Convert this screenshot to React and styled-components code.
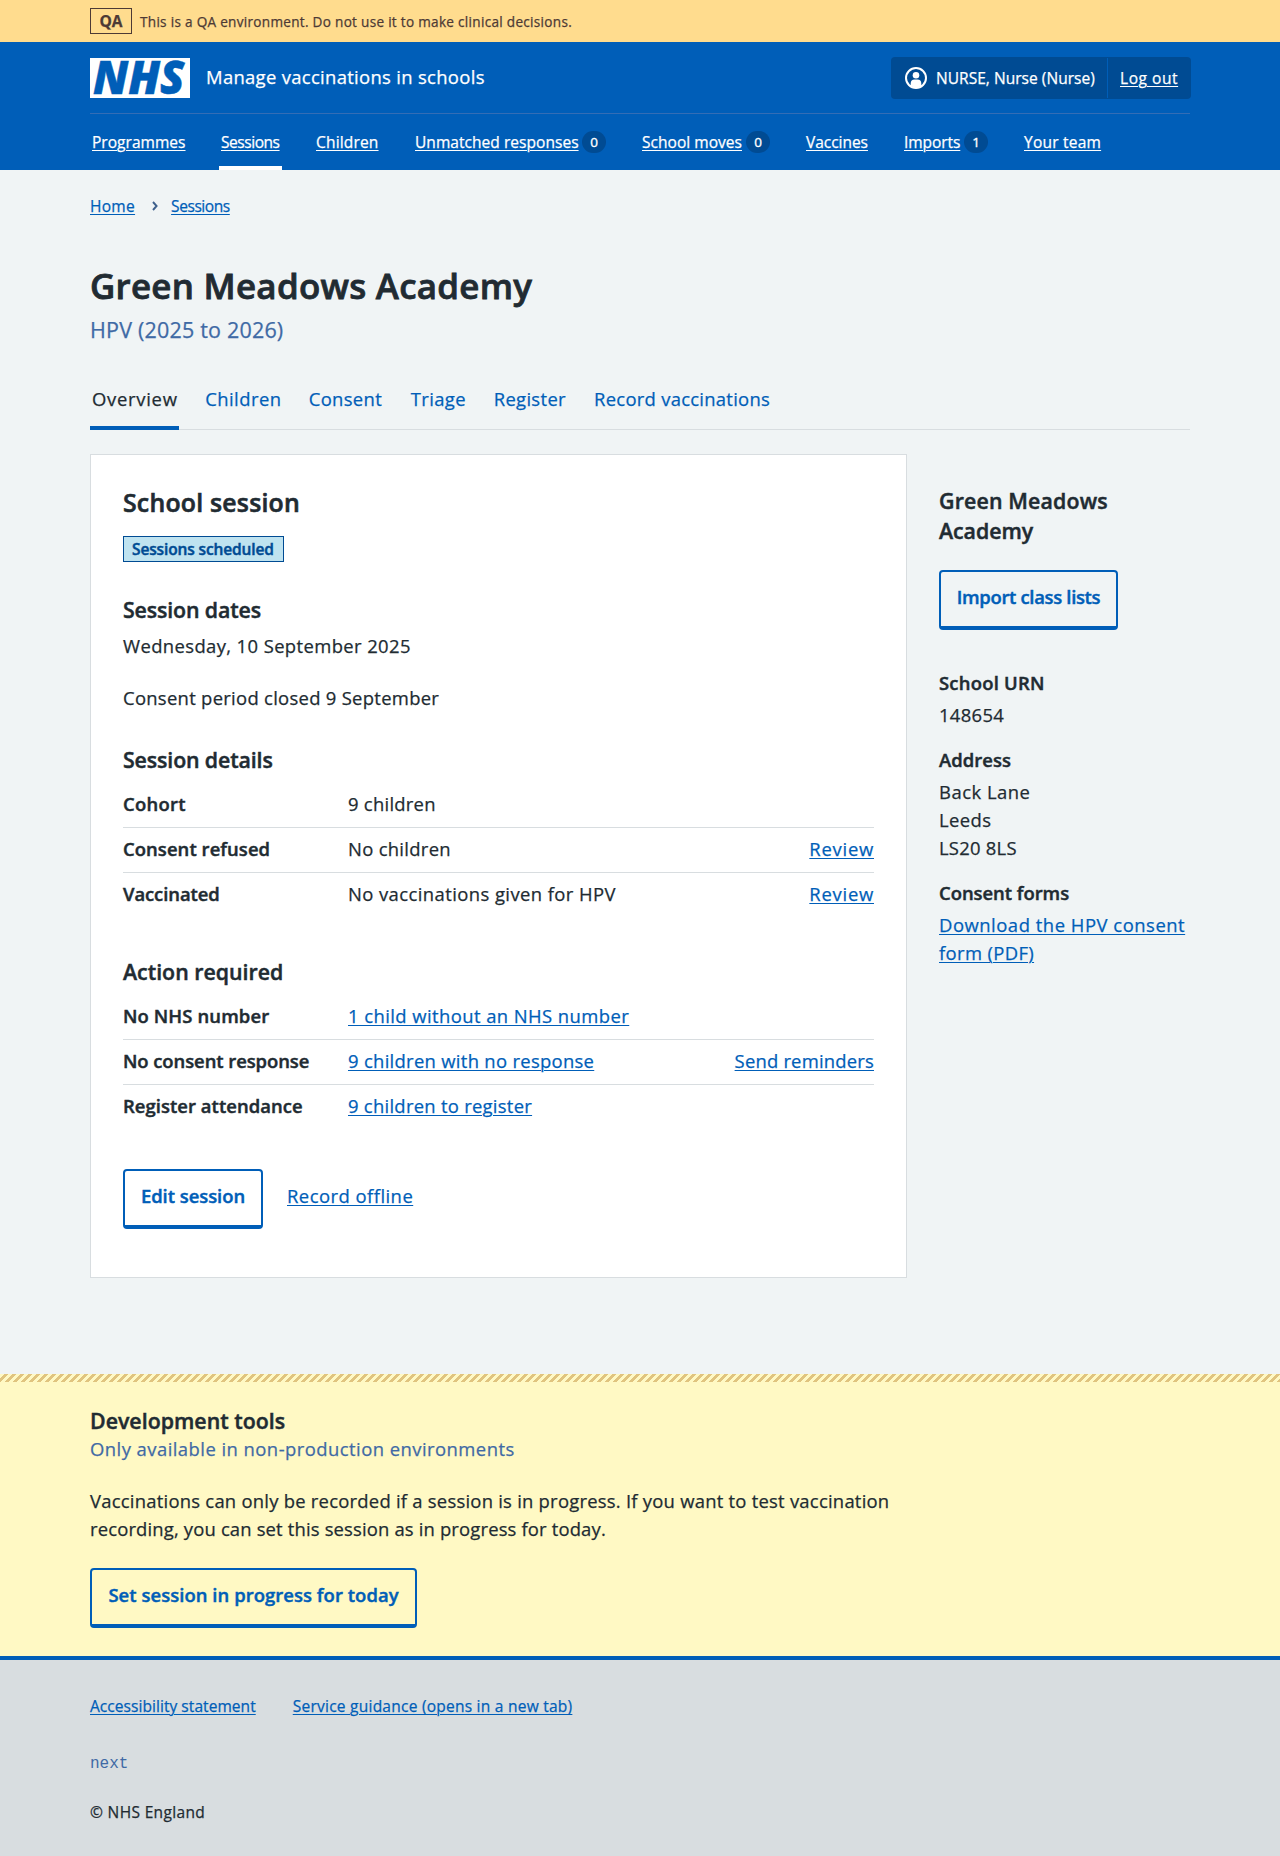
import React from "react";
import styled, { createGlobalStyle, css } from "styled-components";

const color = {
  blue: "#005eb8",
  darkBlue: "#004b93",
  text: "#212b32",
  secondary: "#3f6aa5",
  border: "#d8dde0",
  page: "#f0f4f5",
  white: "#ffffff",
};

const GlobalStyle = createGlobalStyle`
  *, *::before, *::after { box-sizing: border-box; }
  body {
    margin: 0;
    background: ${color.page};
    color: ${color.text};
    font-family: "Open Sans", "Noto Sans", Arial, sans-serif;
    -webkit-text-stroke-width: 0.25px;
  }
  h1, h2, h3, h4, p, ul, ol, dl, dd, dt { margin: 0; padding: 0; }
  ul, ol { list-style: none; }
`;

const tracking = css`
  letter-spacing: ${(p) => p.$ls || 0}px;
  white-space: nowrap;
`;
const semibold = css`
  font-weight: 600;
  -webkit-text-stroke-width: 0.45px;
`;
const small = css`
  font-size: 15.52px;
  line-height: 24px;
`;
const body = css`
  font-size: 18.43px;
  line-height: 28px;
`;

const Container = styled.div`
  width: 1100px;
  margin: 0 auto;
`;

const Link = styled.a`
  ${tracking}
  color: ${(p) => (p.$light ? color.white : color.blue)};
  text-decoration: underline;
  text-decoration-thickness: 1px;
  text-underline-offset: 1.5px;
  cursor: pointer;
`;

/* Environment banner */
const Banner = styled.div`
  background: #ffdc8e;
  color: #4d3a35;
`;
const BannerInner = styled(Container)`
  display: flex;
  align-items: center;
  gap: 8px;
  height: 42px;
`;
const EnvTag = styled.strong`
  ${small}
  ${tracking}
  width: 42px;
  border: 1px solid currentColor;
  text-align: center;
  font-weight: 700;
`;
const EnvText = styled.span`
  ${tracking}
  margin-top: 2px;
  font-size: 13.58px;
  line-height: 20px;
`;

/* Header */
const Header = styled.header`
  background: ${color.blue};
  color: ${color.white};
`;
const HeaderTop = styled(Container)`
  display: flex;
  align-items: flex-start;
  height: 72px;
  padding-top: 15px;
  border-bottom: 1px solid #346db5;
`;
const Logo = styled.svg`
  display: block;
  width: 100px;
  height: 40px;
  margin-top: 1px;
  overflow: visible;
  background: ${color.white};
`;
const ServiceName = styled.span`
  ${body}
  ${tracking}
  margin: 6px auto 0 16px;
`;
const Account = styled.div`
  ${small}
  display: flex;
  width: 300px;
  height: 42px;
  margin-right: -1px;
  border-radius: 4px;
  background: ${color.darkBlue};
`;
const AccountUser = styled.div`
  ${tracking}
  display: flex;
  align-items: center;
  gap: 9px;
  width: 216px;
  padding-left: 14px;
`;
const AccountAction = styled.div`
  display: flex;
  align-items: center;
  flex: 1;
  margin: 1px 0;
  padding-left: 12px;
  border-left: 1px solid ${color.blue};
`;
const UserIcon = styled.svg`
  display: block;
  width: 22px;
  height: 22px;
  flex: none;
`;
const Nav = styled(Container)`
  ${small}
  display: flex;
  gap: 32px;
  height: 56px;
`;
const NavItem = styled.div`
  display: flex;
  align-items: center;
  justify-content: space-between;
  width: ${(p) => p.$w}px;
  padding: 0 2px;
  box-shadow: ${(p) => (p.$current ? `inset 0 -4px ${color.white}` : "none")};
`;
const Count = styled.span`
  width: 24px;
  height: 22px;
  border-radius: 11px;
  background: ${color.darkBlue};
  font-size: 13.5px;
  line-height: 22px;
  text-align: center;
  -webkit-text-stroke-width: 0.35px;
`;

/* Page heading */
const Breadcrumb = styled.nav`
  ${small}
  display: flex;
  align-items: center;
  margin-top: 24px;
`;
const Chevron = styled.svg`
  width: 6px;
  height: 10px;
  margin: 0 13px 0 17px;
`;
const Title = styled.h1`
  ${tracking}
  ${semibold}
  margin-top: 44px;
  font-size: 34.92px;
  line-height: 47px;
  -webkit-text-stroke-width: 0.8px;
`;
const Caption = styled.p`
  ${tracking}
  margin-top: 6px;
  color: ${color.secondary};
  font-size: 21.5px;
  line-height: 30px;
`;
const Tabs = styled.nav`
  ${body}
  display: flex;
  gap: 24px;
  height: 45px;
  margin: 40px 0 24px;
  box-shadow: inset 0 -1px ${color.border};
`;
const Tab = styled.a`
  ${tracking}
  width: ${(p) => p.$w}px;
  padding-left: 2px;
  color: ${(p) => (p.$current ? color.text : color.blue)};
  box-shadow: ${(p) => (p.$current ? `inset 0 -4px ${color.blue}` : "none")};
`;

/* Content */
const Columns = styled.div`
  display: grid;
  grid-template-columns: 817px 251px;
  column-gap: 32px;
  align-items: start;
  padding-bottom: 96px;
`;
const Card = styled.section`
  padding: 30px 32px 48px;
  border: 1px solid ${color.border};
  background: ${color.white};
`;
const CardTitle = styled.h2`
  ${tracking}
  ${semibold}
  font-size: 24.8px;
  line-height: 34px;
  -webkit-text-stroke-width: 0.6px;
`;
const Tag = styled.strong`
  ${small}
  ${tracking}
  ${semibold}
  display: block;
  width: 161px;
  margin-top: 17px;
  padding-left: 8px;
  border: 1px solid ${color.darkBlue};
  background: #bfe3f0;
  color: ${color.darkBlue};
`;
const Heading = styled.h3`
  ${tracking}
  ${semibold}
  margin-top: ${(p) => p.$mt || 0}px;
  font-size: 21.34px;
  line-height: 30px;
`;
const Text = styled.p`
  ${body}
  ${tracking}
  margin-top: ${(p) => p.$mt || 0}px;
  color: ${(p) => (p.$secondary ? color.secondary : "inherit")};
`;
const Summary = styled.dl`
  ${body}
  margin-top: 8px;
`;
const SummaryRow = styled.div`
  display: grid;
  grid-template-columns: 225px 1fr auto;
  padding: 7px 0 9px;
  & + & {
    border-top: 1px solid ${color.border};
  }
`;
const Key = styled.dt`
  ${tracking}
  ${semibold}
`;
const Value = styled.dd`
  ${tracking}
`;
const Actions = styled.div`
  ${body}
  display: flex;
  align-items: flex-start;
  gap: 24px;
  margin-top: 40px;
`;
const ActionLink = styled(Link)`
  margin-top: 13px;
`;
const Button = styled.button`
  ${body}
  ${tracking}
  ${semibold}
  display: block;
  width: ${(p) => p.$w}px;
  height: 60px;
  margin-top: ${(p) => p.$mt || 0}px;
  padding: 11px 0 15px;
  border: 2px solid ${color.blue};
  border-bottom-width: 4px;
  border-radius: 4px;
  background: transparent;
  color: ${color.blue};
  font-family: inherit;
  text-align: center;
`;
const Aside = styled.aside`
  padding-top: 32px;
`;
const Facts = styled.dl`
  ${body}
  display: grid;
  gap: 17px;
  margin-top: 39px;
`;
const Fact = styled.div`
  display: grid;
  gap: 4px;
`;

/* Development tools */
const DevTools = styled.section`
  padding-bottom: 28px;
  background: #fff9c4;
  &::before {
    content: "";
    display: block;
    height: 8px;
    margin-bottom: 24px;
    background: linear-gradient(
        135deg,
        #fff9c4 25%,
        #e0c47f 25%,
        #e0c47f 50%,
        #fff9c4 50%,
        #fff9c4 75%,
        #e0c47f 75%
      )
      0 0 / 8px 8px;
  }
`;

/* Footer */
const Footer = styled.footer`
  ${small}
  height: 200px;
  padding-top: 34px;
  border-top: 4px solid ${color.blue};
  background: ${color.border};
`;
const FooterLinks = styled.div`
  display: flex;
  gap: 37px;
`;
const Version = styled.p`
  margin-top: 34px;
  color: ${color.secondary};
  font-family: "Liberation Mono", monospace;
  font-size: 16px;
  line-height: 24px;
  -webkit-text-stroke-width: 0;
`;
const Copyright = styled.p`
  ${tracking}
  margin-top: 24px;
`;

const NAV = [
  { label: "Programmes", w: 97, ls: 0.03 },
  { label: "Sessions", w: 63, ls: -0.45, current: true },
  { label: "Children", w: 67, ls: 0.17 },
  { label: "Unmatched responses", w: 195, ls: 0.04, count: 0 },
  { label: "School moves", w: 132, ls: 0.03, count: 0 },
  { label: "Vaccines", w: 66, ls: -0.04 },
  { label: "Imports", w: 88, ls: -0.07, count: 1 },
  { label: "Your team", w: 81, ls: 0.22 },
];

const TABS = [
  { label: "Overview", w: 89.2, ls: 0.72, current: true },
  { label: "Children", w: 79.5, ls: 0.45 },
  { label: "Consent", w: 78, ls: 0.35 },
  { label: "Triage", w: 59, ls: 0.39 },
  { label: "Register", w: 76.4, ls: 0.33 },
  { label: "Record vaccinations", w: 180, ls: 0.27 },
];

const DETAILS = [
  { key: "Cohort", kls: 0.3, value: "9 children", vls: 0.26 },
  { key: "Consent refused", kls: 0.08, value: "No children", vls: 0.3 },
  { key: "Vaccinated", kls: -0.07, value: "No vaccinations given for HPV", vls: 0.42 },
];
DETAILS[1].action = DETAILS[2].action = "Review";
DETAILS[1].als = DETAILS[2].als = 0.75;

const REQUIRED = [
  { key: "No NHS number", kls: 0.12, value: "1 child without an NHS number", vls: 0.43, link: true },
  { key: "No consent response", kls: -0.06, value: "9 children with no response", vls: 0.3, link: true, action: "Send reminders", als: 0.2 },
  { key: "Register attendance", kls: 0.06, value: "9 children to register", vls: 0.27, link: true },
];

function SummaryList({ rows }) {
  return (
    <Summary>
      {rows.map((r) => (
        <SummaryRow key={r.key}>
          <Key $ls={r.kls}>{r.key}</Key>
          <Value $ls={r.vls}>{r.link ? <Link $ls={r.vls}>{r.value}</Link> : r.value}</Value>
          {r.action && (
            <dd>
              <Link $ls={r.als}>{r.action}</Link>
            </dd>
          )}
        </SummaryRow>
      ))}
    </Summary>
  );
}

export default function App() {
  return (
    <>
      <GlobalStyle />
      <Banner>
        <BannerInner>
          <EnvTag $ls={-0.05}>QA</EnvTag>
          <EnvText $ls={0.29}>This is a QA environment. Do not use it to make clinical decisions.</EnvText>
        </BannerInner>
      </Banner>

      <Header>
        <HeaderTop>
          <Logo viewBox="0 0 100 40" role="img" aria-label="NHS">
            <text
              x="3"
              y="36.2"
              textLength="91.5"
              lengthAdjust="spacingAndGlyphs"
              fill={color.blue}
              stroke={color.blue}
              strokeWidth="0.5"
              fontFamily="Open Sans, sans-serif"
              fontSize="45.5"
              fontWeight="800"
              fontStyle="italic"
            >
              NHS
            </text>
          </Logo>
          <ServiceName $ls={0.32}>Manage vaccinations in schools</ServiceName>
          <Account>
            <AccountUser $ls={0.03}>
              <UserIcon viewBox="0 0 22 22" aria-hidden="true">
                <circle cx="11" cy="11" r="10" fill="none" stroke="#fff" strokeWidth="2" />
                <circle cx="11" cy="8.3" r="3.3" fill="#fff" />
                <path d="M5.7 19v-2.6a3.9 3.9 0 0 1 3.9-3.9h2.8a3.9 3.9 0 0 1 3.9 3.9V19a9.6 9.6 0 0 1-10.6 0z" fill="#fff" />
              </UserIcon>
              NURSE, Nurse (Nurse)
            </AccountUser>
            <AccountAction>
              <Link $light $ls={0.55}>Log out</Link>
            </AccountAction>
          </Account>
        </HeaderTop>
        <Nav as="nav">
          {NAV.map((n) => (
            <NavItem key={n.label} $w={n.w} $current={n.current}>
              <Link $light $ls={n.ls}>{n.label}</Link>
              {n.count !== undefined && <Count>{n.count}</Count>}
            </NavItem>
          ))}
        </Nav>
      </Header>

      <Container as="main">
        <Breadcrumb>
          <Link $ls={0.3}>Home</Link>
          <Chevron viewBox="0 0 6 10" aria-hidden="true">
            <path d="M1 1l3.6 4L1 9" fill="none" stroke="#3d5f8c" strokeWidth="1.9" />
          </Chevron>
          <Link $ls={-0.43}>Sessions</Link>
        </Breadcrumb>
        <Title $ls={0.28}>Green Meadows Academy</Title>
        <Caption $ls={0.19}>HPV (2025 to 2026)</Caption>
        <Tabs>
          {TABS.map((t) => (
            <Tab key={t.label} $w={t.w} $ls={t.ls} $current={t.current}>
              {t.label}
            </Tab>
          ))}
        </Tabs>

        <Columns>
          <Card>
            <CardTitle $ls={0.24}>School session</CardTitle>
            <Tag $ls={-0.14}>Sessions scheduled</Tag>
            <Heading $mt={33} $ls={-0.13}>Session dates</Heading>
            <Text $mt={7} $ls={0.39}>Wednesday, 10 September 2025</Text>
            <Text $mt={24} $ls={0.29}>Consent period closed 9 September</Text>
            <Heading $mt={33} $ls={-0.12}>Session details</Heading>
            <SummaryList rows={DETAILS} />
            <Heading $mt={40} $ls={0.01}>Action required</Heading>
            <SummaryList rows={REQUIRED} />
            <Actions>
              <Button $w={140} $ls={-0.03}>Edit session</Button>
              <ActionLink $ls={0.47}>Record offline</ActionLink>
            </Actions>
          </Card>

          <Aside>
            <Heading $ls={0.16}>Green Meadows</Heading>
            <Heading as="div" $ls={-0.05}>Academy</Heading>
            <Button $w={179} $mt={24} $ls={-0.31}>Import class lists</Button>
            <Facts>
              <Fact>
                <Key $ls={0.24}>School URN</Key>
                <Value $ls={0.33}>148654</Value>
              </Fact>
              <Fact>
                <Key $ls={0.06}>Address</Key>
                <Value>
                  <Text $ls={0.5}>Back Lane</Text>
                  <Text $ls={0.4}>Leeds</Text>
                  <Text $ls={0.25}>LS20 8LS</Text>
                </Value>
              </Fact>
              <Fact>
                <Key $ls={-0.02}>Consent forms</Key>
                <Value>
                  <Link $ls={0.52}>Download the HPV consent</Link>
                  <br />
                  <Link $ls={0.36}>form (PDF)</Link>
                </Value>
              </Fact>
            </Facts>
          </Aside>
        </Columns>
      </Container>

      <DevTools>
        <Container>
          <Heading $ls={0.02}>Development tools</Heading>
          <Text $mt={-1} $ls={0.46} $secondary>Only available in non-production environments</Text>
          <Text $mt={24} $ls={0.24}>
            Vaccinations can only be recorded if a session is in progress. If you want to test vaccination
          </Text>
          <Text $ls={0.16}>recording, you can set this session as in progress for today.</Text>
          <Button $w={327} $mt={25} $ls={0.06}>Set session in progress for today</Button>
        </Container>
      </DevTools>

      <Footer>
        <Container>
          <FooterLinks>
            <Link $ls={0.05}>Accessibility statement</Link>
            <Link $ls={0.24}>Service guidance (opens in a new tab)</Link>
          </FooterLinks>
          <Version>next</Version>
          <Copyright $ls={0.34}>© NHS England</Copyright>
        </Container>
      </Footer>
    </>
  );
}
